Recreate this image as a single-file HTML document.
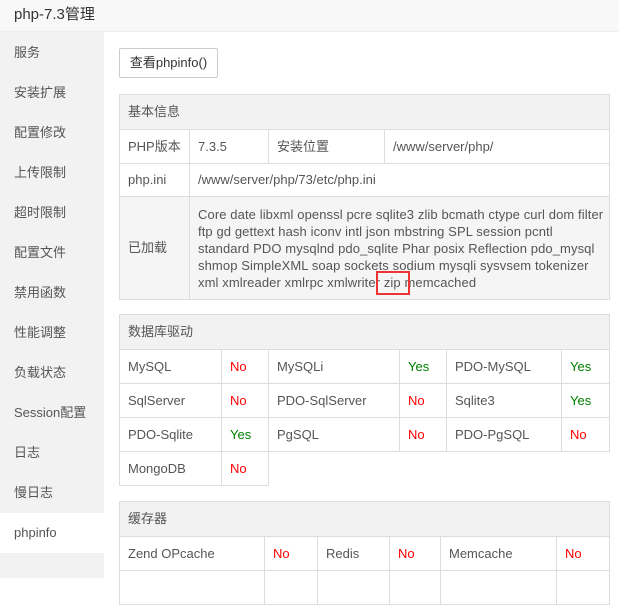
<!DOCTYPE html>
<html><head><meta charset="utf-8"><style>
*{box-sizing:border-box;margin:0;padding:0}
body{width:619px;height:578px;overflow:hidden;background:#fff;font-family:"Liberation Sans","Noto Sans CJK SC",sans-serif;font-size:13px;color:#555;position:relative}
.hd{position:absolute;left:0;top:0;width:619px;height:32px;background:#f8f8f8;border-bottom:1px solid #eee;font-size:15px;color:#333;padding-left:14px;line-height:30px}
.sb{position:absolute;left:0;top:32px;width:104px;height:546px;background:#f2f2f2}
.sb .it{position:absolute;left:14px;color:#555;line-height:20px}
.act{position:absolute;left:0;top:481px;width:104px;height:40px;background:#fff}
.btn{position:absolute;left:119px;top:48px;width:99px;height:30px;border:1px solid #ccc;border-radius:2px;line-height:28px;text-align:center;color:#333}
table{position:absolute;left:119px;border-collapse:collapse;table-layout:fixed;width:490px}
td{border:1px solid #ddd;padding:0 8px;line-height:18px;vertical-align:middle}
td.h{background:#f2f2f2;height:35px;color:#555}
.r{color:#f00}.g{color:#008000}
.box{position:absolute;left:376px;top:271px;width:34px;height:24px;border:2px solid #e33}
.ld{white-space:nowrap;line-height:17px;padding-right:2px;letter-spacing:0.1px}
</style></head><body>
<div class="hd">php-7.3管理</div>
<div class="sb">
<div class="act"></div>
<div class="it" style="top:11px">服务</div>
<div class="it" style="top:51px">安装扩展</div>
<div class="it" style="top:91px">配置修改</div>
<div class="it" style="top:131px">上传限制</div>
<div class="it" style="top:171px">超时限制</div>
<div class="it" style="top:211px">配置文件</div>
<div class="it" style="top:251px">禁用函数</div>
<div class="it" style="top:291px">性能调整</div>
<div class="it" style="top:331px">负载状态</div>
<div class="it" style="top:371px">Session配置</div>
<div class="it" style="top:411px">日志</div>
<div class="it" style="top:451px">慢日志</div>
<div class="it" style="top:491px">phpinfo</div>
</div>
<div class="btn">查看phpinfo()</div>
<table style="top:94px">
<colgroup><col style="width:70px"><col style="width:79px"><col style="width:116px"><col style="width:225px"></colgroup>
<tr><td class="h" colspan="4">基本信息</td></tr>
<tr><td style="height:34px">PHP版本</td><td>7.3.5</td><td>安装位置</td><td>/www/server/php/</td></tr>
<tr><td style="height:33px">php.ini</td><td colspan="3">/www/server/php/73/etc/php.ini</td></tr>
<tr style="background:#f5f5f5"><td style="height:103px">已加载</td><td colspan="3" class="ld">Core date libxml openssl pcre sqlite3 zlib bcmath ctype curl dom filter<br>ftp gd gettext hash iconv intl json mbstring SPL session pcntl<br>standard PDO mysqlnd pdo_sqlite Phar posix Reflection pdo_mysql<br>shmop SimpleXML soap sockets sodium mysqli sysvsem tokenizer<br>xml xmlreader xmlrpc xmlwriter zip memcached</td></tr>
</table>
<div class="box"></div>
<table style="top:314px">
<colgroup><col style="width:102px"><col style="width:47px"><col style="width:131px"><col style="width:47px"><col style="width:115px"><col style="width:48px"></colgroup>
<tr><td class="h" colspan="6">数据库驱动</td></tr>
<tr><td style="height:34px">MySQL</td><td class="r">No</td><td>MySQLi</td><td class="g">Yes</td><td>PDO-MySQL</td><td class="g">Yes</td></tr>
<tr><td style="height:34px">SqlServer</td><td class="r">No</td><td>PDO-SqlServer</td><td class="r">No</td><td>Sqlite3</td><td class="g">Yes</td></tr>
<tr><td style="height:34px">PDO-Sqlite</td><td class="g">Yes</td><td>PgSQL</td><td class="r">No</td><td>PDO-PgSQL</td><td class="r">No</td></tr>
<tr><td style="height:34px">MongoDB</td><td class="r">No</td><td colspan="4" style="border:none;border-top:1px solid #ddd"></td></tr>
</table>
<table style="top:501px">
<colgroup><col style="width:145px"><col style="width:53px"><col style="width:72px"><col style="width:51px"><col style="width:116px"><col style="width:53px"></colgroup>
<tr><td class="h" colspan="6">缓存器</td></tr>
<tr><td style="height:34px">Zend OPcache</td><td class="r">No</td><td>Redis</td><td class="r">No</td><td>Memcache</td><td class="r">No</td></tr>
<tr><td style="height:34px"></td><td></td><td></td><td></td><td></td><td></td></tr>
</table>
</body></html>
